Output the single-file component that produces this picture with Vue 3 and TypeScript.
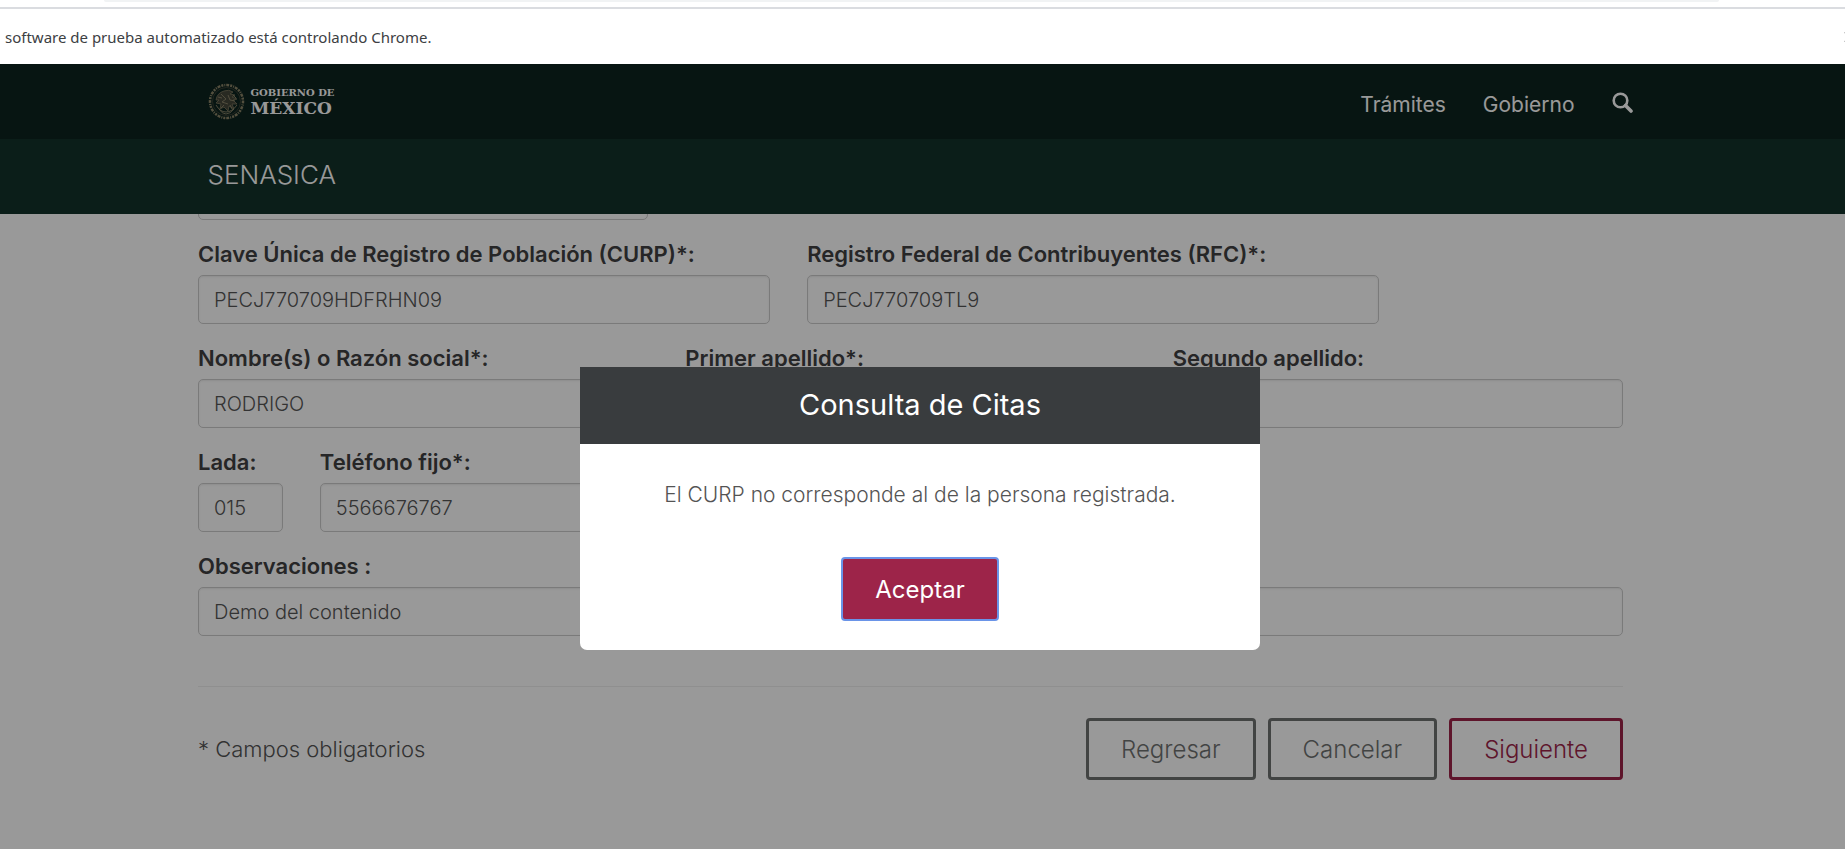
<script setup lang="ts">
import { ref } from 'vue'

interface Field {
  id: string
  label: string
  value: string
  span: string
}

const rows = ref<Field[][]>([
  [
    { id: 'curp', label: 'Clave Única de Registro de Población (CURP)*:', value: 'PECJ770709HDFRHN09', span: 'span-5' },
    { id: 'rfc', label: 'Registro Federal de Contribuyentes (RFC)*:', value: 'PECJ770709TL9', span: 'span-5' },
  ],
  [
    { id: 'nombre', label: 'Nombre(s) o Razón social*:', value: 'RODRIGO', span: 'span-4' },
    { id: 'apellido1', label: 'Primer apellido*:', value: '', span: 'span-4' },
    { id: 'apellido2', label: 'Segundo apellido:', value: '', span: 'span-4' },
  ],
  [
    { id: 'lada', label: 'Lada:', value: '015', span: 'span-1' },
    { id: 'telefono', label: 'Teléfono fijo*:', value: '5566676767', span: 'span-4' },
  ],
  [{ id: 'observaciones', label: 'Observaciones :', value: 'Demo del contenido', span: 'span-12' }],
])
const tipo = ref('')
</script>

<template>
  <div class="window">
    <div class="toolbar"><div class="omnibox"></div></div>
    <div class="infobar">
      <span>software de prueba automatizado está controlando Chrome.</span>
      <svg class="close" width="12" height="12" viewBox="0 0 12 12" aria-hidden="true">
        <path d="M1 1l10 10M11 1L1 11" stroke="#777" stroke-width="2" />
      </svg>
    </div>

    <div class="page">
      <header>
        <div class="topbar">
          <div class="container bar">
            <a href="#" class="brand" aria-label="Gobierno de México">
              <svg width="37" height="37" viewBox="0 0 37 37" fill="none" aria-hidden="true">
                <circle cx="18.5" cy="18.5" r="16.5" stroke="#8b8468" stroke-width="2.5" stroke-dasharray="2 1 1 1 3 1" />
                <circle cx="18.5" cy="18.5" r="14" stroke="#3a3f33" stroke-width="1" />
                <path d="M8 17q1-7 8-9 5-2 9 1l-3 2 5 1-3 2 5 2-4 1 4 4-5 0 2 5-5-3-1 5-4-4-4 2 1-5-5-1 3-3z" fill="#45463a" stroke="#7d775e" stroke-width=".8" />
                <path d="M13 11l5 5-4 3 6 2M20 12l2 5 5 1M8 22q4 7 10 7t11-7M11 26q3 5 7 5t8-5M16 22l-3 3M22 22l2 4M10 14l4 1M25 12l3 3" stroke="#8f886c" stroke-width=".9" />
              </svg>
              <span class="brand-text">
                <span class="brand-small">GOBIERNO DE</span>
                <span class="brand-big">MÉXICO</span>
              </span>
            </a>
            <nav>
              <a href="#">Trámites</a>
              <a href="#">Gobierno</a>
              <a href="#" class="search" aria-label="Buscar">
                <svg width="21" height="21" viewBox="0 0 21 21" fill="none" stroke="#fff" aria-hidden="true">
                  <circle cx="8.5" cy="8.5" r="6.8" stroke-width="2.6" />
                  <path d="M13.5 13.5l5.5 5.5" stroke-width="3.6" stroke-linecap="round" />
                </svg>
              </a>
            </nav>
          </div>
        </div>
        <div class="subbar">
          <div class="container bar"><a href="#" class="agency">SENASICA</a></div>
        </div>
      </header>

      <main>
        <form class="container" @submit.prevent>
          <div class="grid scrolled">
            <input v-model="tipo" class="span-4" type="text" aria-label="Tipo" />
          </div>
          <div v-for="(row, i) in rows" :key="i" class="grid">
            <div v-for="f in row" :key="f.id" class="field" :class="f.span">
              <label :for="f.id">{{ f.label }}</label>
              <input :id="f.id" v-model="f.value" type="text" />
            </div>
          </div>
          <hr />
          <div class="actions">
            <p>* Campos obligatorios</p>
            <div class="buttons">
              <button type="button" class="btn">Regresar</button>
              <button type="button" class="btn">Cancelar</button>
              <button type="submit" class="btn primary">Siguiente</button>
            </div>
          </div>
        </form>
      </main>

      <div class="backdrop"></div>
      <div class="modal" role="dialog" aria-modal="true" aria-labelledby="modal-title">
        <h4 id="modal-title">Consulta de Citas</h4>
        <div class="modal-body">
          <p>El CURP no corresponde al de la persona registrada.</p>
          <button type="button" class="accept">Aceptar</button>
        </div>
      </div>
    </div>
  </div>
</template>

<style>
body {
  margin: 0;
  overflow: hidden;
}
</style>

<style scoped>
* {
  box-sizing: border-box;
}
.window {
  display: flex;
  flex-direction: column;
  min-height: 100vh;
  overflow: hidden;
  font-family: Inter, "Open Sans", sans-serif;
  font-weight: 300;
  color: #404041;
}
.toolbar {
  height: 9px;
  padding: 0 126px 0 104px;
  border-bottom: 2px solid #dadce0;
  background: #fff;
}
.omnibox {
  height: 2px;
  border-radius: 0 0 8px 8px;
  background: #f1f3f4;
}
.infobar {
  display: flex;
  align-items: center;
  justify-content: space-between;
  height: 55px;
  margin-right: -11px;
  padding-left: 5px;
  background: #fff;
  color: #3c4043;
  font: 400 15px/24px "Noto Sans", sans-serif;
}
.close {
  flex: none;
}
.page {
  position: relative;
  flex: 1;
  background: #fff;
}
.container {
  max-width: 1425px;
  margin: 0 auto;
}
main {
  padding-right: 24px;
}
.topbar,
.subbar {
  padding-right: 5px;
  background: #0c231e;
}
.subbar {
  background: #13322b;
}
.bar {
  display: flex;
  align-items: center;
  justify-content: space-between;
  height: 75px;
}
.subbar .bar {
  padding-bottom: 4px;
}
.brand {
  display: flex;
  gap: 6px;
  color: #fff;
  text-decoration: none;
}
.brand-text {
  display: flex;
  flex-direction: column;
  justify-content: center;
  font-family: "DejaVu Serif", serif;
  font-weight: 700;
}
.brand-small {
  font-size: 10px;
  line-height: 12px;
}
.brand-big {
  font-size: 17px;
  line-height: 18px;
}
nav {
  display: flex;
  align-items: center;
  gap: 37px;
  padding-top: 5px;
}
nav a,
.agency {
  color: #fff;
  font-size: 21px;
  font-weight: 400;
  text-decoration: none;
}
.search {
  display: flex;
  padding-bottom: 4px;
}
.agency {
  font-size: 26px;
  font-weight: 300;
}
.grid {
  display: grid;
  grid-template-columns: repeat(12, minmax(0, 1fr));
  column-gap: 37px;
}
.scrolled {
  height: 6px;
  margin-bottom: 22px;
  align-content: end;
  overflow: hidden;
}
.span-1 { grid-column: span 1; }
.span-4 { grid-column: span 4; }
.span-5 { grid-column: span 5; }
.span-12 { grid-column: span 12; }
.field {
  display: flex;
  flex-direction: column;
  padding-bottom: 22px;
}
label {
  margin-bottom: 9px;
  font-size: 22px;
  font-weight: 600;
  line-height: 24px;
  white-space: nowrap;
}
input {
  width: 100%;
  height: 49px;
  padding: 0 15px;
  border: 1px solid #ccc;
  border-radius: 5px;
  background: #fff;
  box-shadow: inset 0 1px 2px rgba(0, 0, 0, 0.08);
  color: #555;
  font: inherit;
  font-size: 20px;
}
hr {
  height: 1px;
  margin: 28px 0 31px;
  border: 0;
  background: #eee;
}
.actions {
  display: flex;
  align-items: center;
  justify-content: space-between;
}
p {
  margin: 0;
  color: #545454;
  font-size: 22px;
}
.buttons {
  display: flex;
  gap: 12px;
}
.btn,
.accept {
  height: 62px;
  padding: 0 32px;
  border: 3px solid #6f7271;
  border-radius: 4px;
  background: #fff;
  color: #6f7271;
  font: inherit;
  font-size: 24px;
}
.btn.primary {
  border-color: #9d2449;
  color: #9d2449;
}
.backdrop {
  position: absolute;
  inset: 0;
  background: rgba(0, 0, 0, 0.4);
}
.modal {
  position: absolute;
  top: 303px;
  left: 0;
  right: 5px;
  width: 680px;
  max-width: 100%;
  margin: 0 auto;
  border-radius: 0 0 7px 7px;
  background: #fff;
  text-align: center;
}
h4 {
  margin: 0;
  padding: 19px 20px 21px;
  background: #393c3e;
  color: #fff;
  font-size: 29px;
  font-weight: 400;
  line-height: 37px;
}
.modal-body {
  padding: 37px 30px 29px;
}
.modal-body p {
  margin-bottom: 48px;
  font-size: 21px;
  line-height: 28px;
}
.accept {
  height: 64px;
  border: 2px solid #6a94e8;
  background: #9d2449;
  color: #fff;
  font-weight: 400;
}
</style>
